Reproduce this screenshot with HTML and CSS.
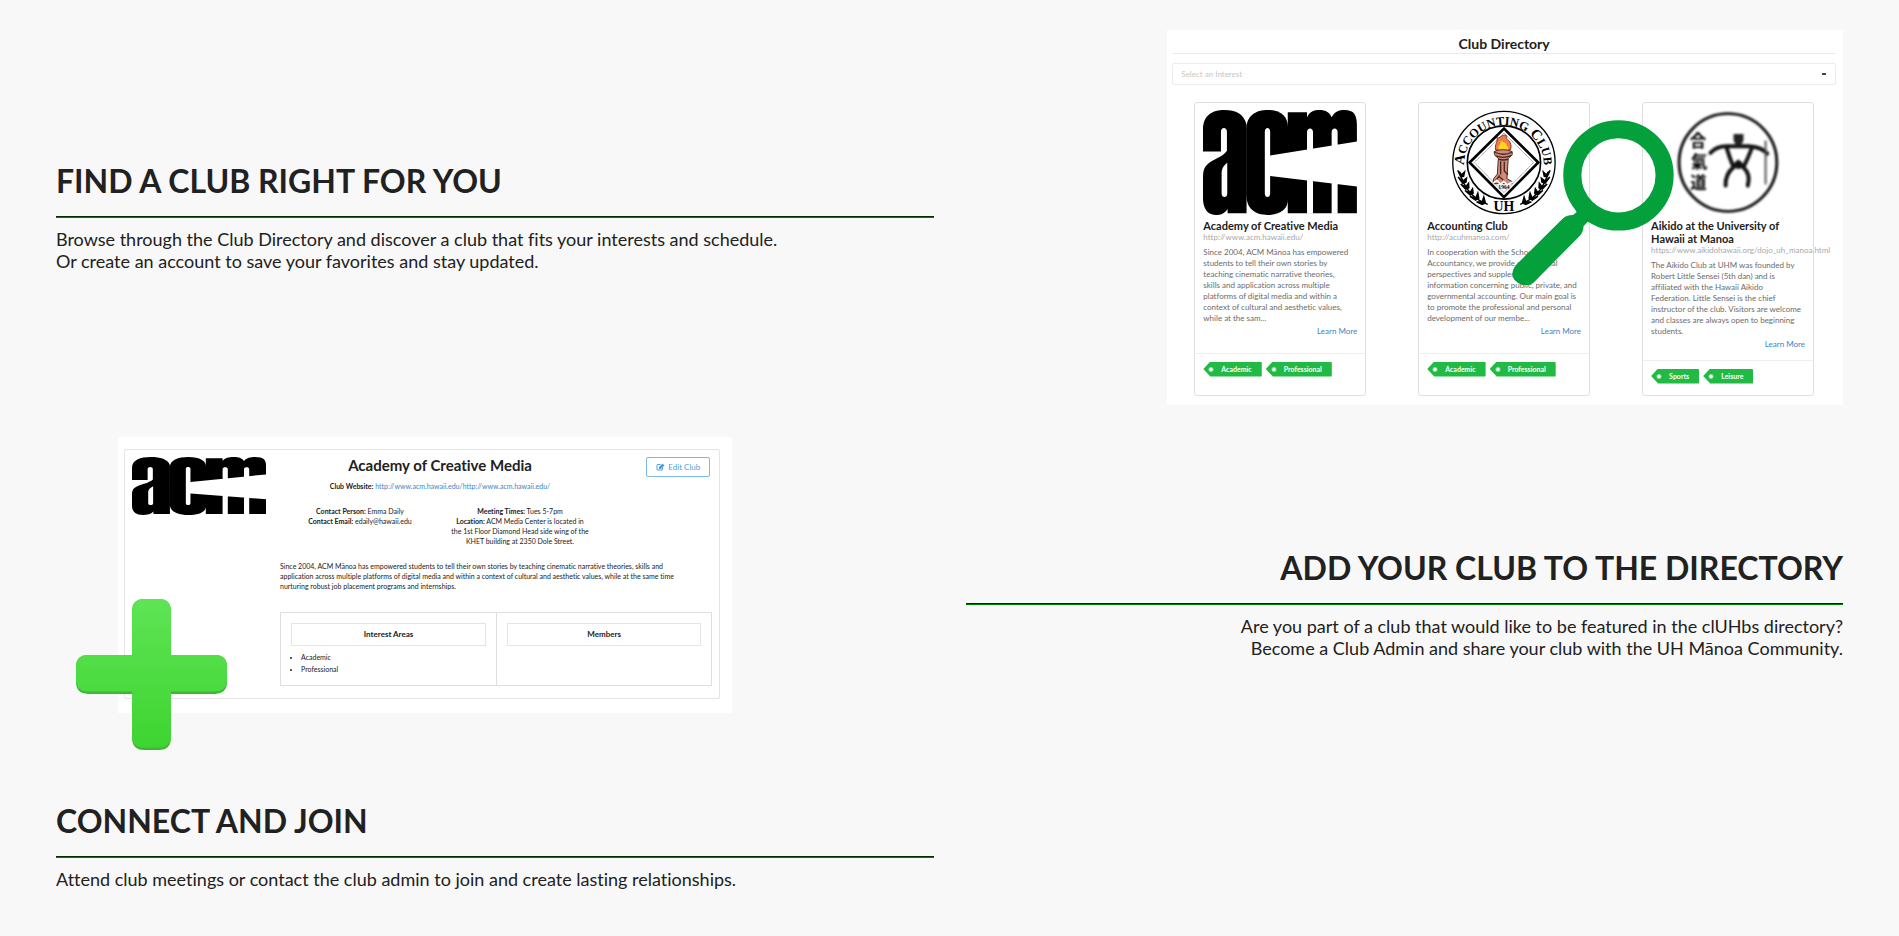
FILE: index.html
```html
<!DOCTYPE html>
<html lang="en">
<head>
<meta charset="utf-8">
<meta name="viewport" content="width=device-width, initial-scale=1">
<title>clUHbs</title>
<link rel="stylesheet" href="styles.css">
</head>
<body>
<svg class="symbols" aria-hidden="true">
  <symbol id="acm" viewBox="0 0 463 314" preserveAspectRatio="none">
    <path d="M0 124V60C0 15 28 0 65 0C98 0 124 12 131 44V309H74V295C66 310 52 314 38 314C10 314 0 290 0 265V205C0 175 6 168 20 157C38 145 60 140 72 122V65C72 50 54 50 54 65V124Z"/>
    <path d="M130 60C130 15 160 0 195 0C235 0 256 20 256 55V265C256 295 235 314 195 314C155 314 130 295 130 250Z"/>
    <path d="M255 7H313V22C320 5 335 0 350 0C370 0 382 8 387 22C395 5 410 0 425 0C455 0 463 15 463 45V309H255V275Z"/>
    <path fill="#fff" d="M73 158C60 168 56 178 56 190V250C56 264 73 264 73 250ZM186 64C186 50 202 50 202 64V250C202 264 186 264 186 250ZM313 66C313 52 331 52 331 66V310H313ZM387 66C387 52 405 52 405 66V310H387ZM202 136L464 94V229L202 197Z"/>
  </symbol>
</svg>

<main class="page">
  <section class="row row-find">
    <div class="copy">
      <h1 class="heading">FIND A CLUB RIGHT FOR YOU</h1>
      <hr class="rule">
      <p class="text">Browse through the Club Directory and discover a club that fits your interests and schedule.<br>Or create an account to save your favorites and stay updated.</p>
    </div>
    <div class="shot shot-directory">
      <h2 class="dir-title">Club Directory</h2>
      <select class="dir-select" aria-label="Select an Interest"><option>Select an Interest</option></select>
      <div class="cards">
        <article class="card">
          <div class="card-body">
            <svg class="logo" role="img" aria-label="acm"><use href="#acm"/></svg>
            <h3 class="card-title">Academy of Creative Media</h3>
            <p class="card-url">http://www.acm.hawaii.edu/</p>
            <p class="card-text">Since 2004, ACM Mānoa has empowered<br>students to tell their own stories by<br>teaching cinematic narrative theories,<br>skills and application across multiple<br>platforms of digital media and within a<br>context of cultural and aesthetic values,<br>while at the sam...</p>
            <a class="more" href="#">Learn More</a>
          </div>
          <div class="tags"><span class="tag">Academic</span><span class="tag">Professional</span></div>
        </article>
        <article class="card">
          <div class="card-body">
            <svg class="logo" viewBox="0 0 318 318" role="img" aria-label="Accounting Club seal">
              <circle cx="159" cy="159" r="155" fill="#fff" stroke="#000" stroke-width="4"/>
              <circle cx="159" cy="159" r="111" fill="#fff" stroke="#000" stroke-width="5"/>
              <path d="M159 56L263 159L159 264L55 159Z" fill="#fff" stroke="#000" stroke-width="8"/>
              <path d="M159 70L249 159L159 250L69 159Z" fill="none" stroke="#777" stroke-width="3" stroke-dasharray="3 2"/>
              <defs><path id="arc" d="M38 167A121 121 0 1 1 280 167"/></defs>
              <text class="seal-text" font-size="44"><textPath href="#arc" startOffset="50%" text-anchor="middle">A<tspan font-size="37">CCOUNTING</tspan> C<tspan font-size="37">LUB</tspan></textPath></text>
              <text class="seal-text" x="159" y="307" font-size="42" text-anchor="middle">UH</text>
              <g id="laurel" stroke="#000" stroke-width="4" fill="#000">
                <path fill="none" d="M25 187Q42 260 110 286"/>
                <path d="M19 183L31 196L40 187L37 201L28 202ZM20 203L34 215L46 206L44 219L34 222ZM28 224L43 233L52 221L53 236L43 240ZM41 244L56 250L64 238L66 252L57 258ZM56 262L74 266L80 251L83 267L73 273ZM76 278L93 278L98 263L103 281L93 286Z"/>
              </g>
              <use href="#laurel" transform="matrix(-1 0 0 1 318 0)"/>
              <path d="M134 121C130 101 141 101 138 84C148 88 151 73 166 77C162 92 187 91 179 121Z" fill="#f07d48" stroke="#81332a" stroke-width="3"/>
              <path d="M143 121C139 108 151 107 149 93C159 99 171 99 166 108C175 109 173 119 171 121Z" fill="#ffd51d"/>
              <path d="M129 126Q156 114 184 126V136L172 147L168 208L184 217V223H126L128 208L139 194L142 147L131 136Z" fill="#cf8c77" stroke="#552b25" stroke-width="3"/>
              <path d="M131 128Q158 140 183 128M134 139Q158 148 180 138M142 149Q157 154 172 149M149 155V195M160 157V185L171 196M142 200L157 212M132 216L146 198" fill="none" stroke="#452520" stroke-width="4"/>
              <path d="M126 222L137 213L149 225L158 217L169 226L187 218" fill="none" stroke="#fff" stroke-width="5"/>
              <text class="seal-text" x="159" y="240" font-size="17" text-anchor="middle">1964</text>
            </svg>
            <h3 class="card-title">Accounting Club</h3>
            <p class="card-url">http://acuhmanoa.com/</p>
            <p class="card-text">In cooperation with the School of<br>Accountancy, we provide educational<br>perspectives and supplemental<br>information concerning public, private, and<br>governmental accounting. Our main goal is<br>to promote the professional and personal<br>development of our membe...</p>
            <a class="more" href="#">Learn More</a>
          </div>
          <div class="tags"><span class="tag">Academic</span><span class="tag">Professional</span></div>
        </article>
        <article class="card">
          <div class="card-body">
            <svg class="logo logo-soft" viewBox="0 0 318 318" role="img" aria-label="Aikido club emblem">
              <g fill="none" stroke="#111" stroke-width="9" stroke-linecap="round">
                <circle cx="159" cy="159" r="148"/>
                <path stroke-width="12" d="M106 130Q125 110 154 110H222Q260 112 278 132"/>
                <path stroke-width="12" d="M155 114Q163 143 176 173Q150 195 152 229M232 114Q220 145 206 174Q229 194 219 229M176 173L190 158L206 174"/>
                <path stroke-width="6" stroke="#555" d="M273 95V223"/>
              </g>
              <path d="M176 73H206V92L198 108H184L176 92Z" fill="#222"/>
              <circle cx="191" cy="166" r="13" fill="#111"/>
              <g class="kanji"><text x="43" y="112">合</text><text x="47" y="176">氣</text><text x="45" y="240">道</text></g>
            </svg>
            <h3 class="card-title">Aikido at the University of<br>Hawaii at Manoa</h3>
            <p class="card-url">https://www.aikidohawaii.org/dojo_uh_manoa.html</p>
            <p class="card-text">The Aikido Club at UHM was founded by<br>Robert Little Sensei (5th dan) and is<br>affiliated with the Hawaii Aikido<br>Federation. Little Sensei is the chief<br>instructor of the club. Visitors are welcome<br>and classes are always open to beginning<br>students.</p>
            <a class="more" href="#">Learn More</a>
          </div>
          <div class="tags"><span class="tag">Sports</span><span class="tag">Leisure</span></div>
        </article>
      </div>
      <svg class="magnifier" viewBox="0 0 492 503" aria-hidden="true">
        <circle cx="323" cy="168" r="140" fill="none" stroke="#03a03c" stroke-width="55"/>
        <path fill="#03a03c" d="M191 269L196 280L185 288Q167 288 155 298L10 442Q-6 465 7 485Q27 508 57 499L66 493L206 351Q217 338 217 322L230 309L244 309L260 290L205 250Z"/>
      </svg>
    </div>
  </section>

  <section class="row row-add">
    <div class="shot shot-club">
      <div class="club">
        <svg class="club-logo" role="img" aria-label="acm"><use href="#acm"/></svg>
        <div class="club-main">
          <div class="club-head">
            <div class="club-info">
              <h2 class="club-title">Academy of Creative Media</h2>
              <p class="club-site"><b>Club Website:</b> <a href="#">http://www.acm.hawaii.edu/http://www.acm.hawaii.edu/</a></p>
              <div class="club-contact">
                <p><b>Contact Person:</b> Emma Daily<br><b>Contact Email:</b> edaily@hawaii.edu</p>
                <p><b>Meeting Times:</b> Tues 5-7pm<br><b>Location:</b> ACM Media Center is located in<br>the 1st Floor Diamond Head side wing of the<br>KHET building at 2350 Dole Street.</p>
              </div>
            </div>
            <button class="edit" type="button">
              <svg class="edit-icon" viewBox="0 0 18 16" aria-hidden="true"><path d="M13 9V13Q13 14 12 14H3Q2 14 2 13V4Q2 3 3 3H9" fill="none" stroke="currentColor" stroke-width="2"/><path d="M6 8L13 1L17 5L10 12H6Z" fill="currentColor"/></svg>Edit Club
            </button>
          </div>
          <p class="club-text">Since 2004, ACM Mānoa has empowered students to tell their own stories by teaching cinematic narrative theories, skills and<br>application across multiple platforms of digital media and within a context of cultural and aesthetic values, while at the same time<br>nurturing robust job placement programs and internships.</p>
          <div class="club-lists">
            <div class="club-list"><h3 class="list-title">Interest Areas</h3><ul><li>Academic</li><li>Professional</li></ul></div>
            <div class="club-list"><h3 class="list-title">Members</h3></div>
          </div>
        </div>
      </div>
      <svg class="plus" viewBox="0 0 452 452" aria-hidden="true">
        <defs>
          <linearGradient id="green" gradientUnits="userSpaceOnUse" x1="0" y1="0" x2="0" y2="452"><stop offset="0" stop-color="#5fe455"/><stop offset="1" stop-color="#3dd430"/></linearGradient>
        </defs>
        <path fill="#3bb836" d="M204 0H248Q284 0 284 36V168H416Q452 168 452 204V248Q452 284 416 284H284V416Q284 452 248 452H204Q168 452 168 416V284H36Q0 284 0 248V204Q0 168 36 168H168V36Q168 0 204 0Z"/>
        <path fill="url(#green)" d="M204 0H248Q284 0 284 36V168H416Q452 168 452 204V241Q452 277 416 277H284V409Q284 445 248 445H204Q168 445 168 409V277H36Q0 277 0 241V204Q0 168 36 168H168V36Q168 0 204 0Z"/>
      </svg>
    </div>
    <div class="copy copy-right">
      <h1 class="heading">ADD YOUR CLUB TO THE DIRECTORY</h1>
      <hr class="rule">
      <p class="text">Are you part of a club that would like to be featured in the clUHbs directory?<br>Become a Club Admin and share your club with the UH Mānoa Community.</p>
    </div>
  </section>

  <section class="row">
    <div class="copy">
      <h1 class="heading">CONNECT AND JOIN</h1>
      <hr class="rule">
      <p class="text">Attend club meetings or contact the club admin to join and create lasting relationships.</p>
    </div>
  </section>
</main>
</body>
</html>
```
FILE: styles.css
```css
* { box-sizing: border-box; }
body { margin: 0; background: #f8f8f8; color: #212121; font-family: Lato, "Liberation Sans", sans-serif; font-variant-ligatures: no-common-ligatures; }
h1, h2, h3, p, ul { margin: 0; }
a { color: #4183c4; text-decoration: none; }
.symbols { position: absolute; width: 0; height: 0; }

.page { display: flex; flex-direction: column; gap: 32px; padding: 29px 56px; }
.row { display: grid; grid-template-columns: 1fr 1fr; column-gap: 32px; align-items: center; }
.row-find { min-height: 376px; }
.row-add { min-height: 334px; }
.copy-right { text-align: right; }
.heading { font-size: 32px; line-height: 36px; font-weight: 700; }
.rule { height: 2px; margin: 17px 0 10px; border: 0; border-top: 1px solid #002e00; background: #008000; }
.text { font-size: 18px; line-height: 22px; }

.shot { position: relative; background: #fff; }
.row-add .shot { align-self: start; }

/* Directory preview */
.shot-directory { justify-self: end; width: 77%; padding: 4px 7px 9px 5px; }
.dir-title { border-bottom: 1px solid #eaeaea; font-size: 14px; line-height: 19px; text-align: center; }
.dir-select { display: block; width: 100%; height: 22px; margin: 9px 0 17px; padding: 0 8px; appearance: none; border: 1px solid #ececec; border-radius: 2px; color: #c6c6c6; font: 8px/20px Lato, sans-serif; background: linear-gradient(#444, #444) calc(100% - 9px) 50% / 4px 2px no-repeat #fff; }
.cards { display: grid; grid-template-columns: repeat(3, 1fr); gap: 52px; padding: 0 22px; }
.card { display: flex; flex-direction: column; min-width: 0; min-height: 294px; border: 1px solid #dfdfdf; border-radius: 3px; background: #fff; }
.card-body { display: flex; flex-direction: column; padding: 7px 8px; min-height: 250px; white-space: nowrap; }
.card:last-child .card-body { min-height: 257px; }
.logo { width: 100%; height: 105px; margin-bottom: 4px; }
.logo-soft { filter: blur(1px); }
.seal-text { font-family: "Liberation Serif", serif; font-weight: 700; }
.kanji { font-family: "Noto Sans CJK JP", sans-serif; font-weight: 700; font-size: 50px; }
.card-title { font-size: 11px; line-height: 13px; }
.card-url { margin-bottom: 4px; color: #a8a8a8; font-size: 8px; line-height: 11px; }
.card-text { color: #6b6b6b; font-size: 8px; line-height: 11px; }
.more { align-self: end; font-size: 8px; line-height: 14px; }
.tags { display: flex; gap: 4px; padding: 8px; border-top: 1px solid #eee; }
.tag { padding: 0 10px 0 18px; border-radius: 1px; background: radial-gradient(circle at 8px 50%, #fff 1px, #21ba45 3px); clip-path: polygon(0 50%, 7px 0, 100% 0, 100% 100%, 7px 100%); color: #fff; font-size: 7px; line-height: 15px; font-weight: 700; }
.magnifier { position: absolute; left: 51%; top: 24%; width: 24%; }

/* Club profile preview */
.shot-club { width: 70%; margin-left: 62px; padding: 12px 12px 14px 6px; }
.club { display: grid; grid-template-columns: 134px 1fr; gap: 14px; padding: 7px 7px 12px; border: 1px solid #e4e4e4; border-radius: 2px; font-size: 7px; line-height: 10px; white-space: nowrap; }
.club-logo { width: 134px; height: 58px; }
.club-main { min-width: 0; }
.club-head { display: flex; justify-content: space-between; align-items: start; }
.club-info { width: 320px; text-align: center; }
.club-title { font-size: 15px; line-height: 16px; }
.club-site { padding: 8px 0 15px; }
.club-contact { display: grid; grid-template-columns: 1fr 1fr; }
.edit { display: flex; align-items: center; gap: 3px; height: 20px; margin-right: 2px; padding: 0 9px; border: 1px solid #7ab8e6; border-radius: 2px; background: #fff; color: #4e9fdc; font: 8px/18px Lato, sans-serif; }
.edit-icon { width: 9px; height: 8px; }
.club-text { padding: 15px 0 21px; }
.club-lists { display: grid; grid-template-columns: 1fr 1fr; min-height: 73px; border: 1px solid #dedede; }
.club-list { padding: 10px; }
.club-list + .club-list { border-left: 1px solid #dedede; }
.list-title { border: 1px solid #e4e4e4; font-size: 8px; line-height: 21px; text-align: center; }
.club-list ul { padding: 5px 0 0 10px; line-height: 12px; }
.plus { position: absolute; left: -42px; top: 162px; width: 151px; }
```
